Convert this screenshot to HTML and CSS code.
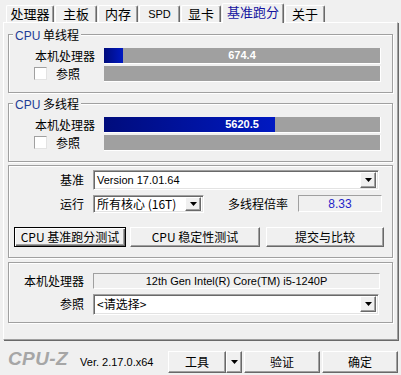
FILE: index.html
```html
<!DOCTYPE html>
<html lang="zh-CN">
<head>
<meta charset="utf-8">
<title>CPU-Z</title>
<link rel="stylesheet" href="styles.css">
</head>
<body>
<div class="window">
  <div class="tabs">
    <div class="tab tw48">处理器</div>
    <div class="tab tw42">主板</div>
    <div class="tab tw40">内存</div>
    <div class="tab tw41 spd">SPD</div>
    <div class="tab tw40">显卡</div>
    <div class="tab active">基准跑分</div>
    <div class="tab tw40">关于</div>
  </div>
  <div class="panel">
    <fieldset class="group">
      <legend><span class="cpu">CPU</span> 单线程</legend>
      <div class="row">
        <span class="label">本机处理器</span>
        <div class="bar"><div class="fill" style="width:7%"></div><span class="value">674.4</span></div>
      </div>
      <div class="row">
        <span class="check"><span class="box"></span>参照</span>
        <div class="bar"></div>
      </div>
    </fieldset>
    <fieldset class="group g2">
      <legend><span class="cpu">CPU</span> 多线程</legend>
      <div class="row">
        <span class="label">本机处理器</span>
        <div class="bar"><div class="fill" style="width:62%"></div><span class="value">5620.5</span></div>
      </div>
      <div class="row">
        <span class="check"><span class="box"></span>参照</span>
        <div class="bar"></div>
      </div>
    </fieldset>
    <div class="frame g3">
      <div class="frow r1">
        <span class="flabel">基准</span>
        <div class="combo edit wide"><span class="ctext latin">Version 17.01.64</span><span class="arrow"><svg width="7" height="4" viewBox="0 0 7 4"><path d="M0 0H7L3.5 4Z" fill="#000"/></svg></span></div>
      </div>
      <div class="frow r2">
        <span class="flabel">运行</span>
        <div class="combo short"><span class="ctext">所有核心 (16T)</span><span class="arrow"><svg width="7" height="4" viewBox="0 0 7 4"><path d="M0 0H7L3.5 4Z" fill="#000"/></svg></span></div>
        <span class="ratio-label">多线程倍率</span>
        <div class="readonly ratio latin">8.33</div>
      </div>
      <div class="frow r3">
        <button class="btn default b1">CPU 基准跑分测试</button>
        <button class="btn b2">CPU 稳定性测试</button>
        <button class="btn b3">提交与比较</button>
      </div>
    </div>
    <div class="frame g4">
      <div class="frow r4">
        <span class="flabel">本机处理器</span>
        <div class="readonly cpuname latin">12th Gen Intel(R) Core(TM) i5-1240P</div>
      </div>
      <div class="frow r5">
        <span class="flabel">参照</span>
        <div class="combo edit wide"><span class="ctext">&lt;请选择&gt;</span><span class="arrow"><svg width="7" height="4" viewBox="0 0 7 4"><path d="M0 0H7L3.5 4Z" fill="#000"/></svg></span></div>
      </div>
    </div>
  </div>
  <div class="footer">
    <span class="logo">CPU-Z</span>
    <span class="ver latin">Ver. 2.17.0.x64</span>
    <div class="fbtns">
      <button class="btn tool">工具</button>
      <button class="btn tool-arrow"><svg width="7" height="4" viewBox="0 0 7 4"><path d="M0 0H7L3.5 4Z" fill="#000"/></svg></button>
      <button class="btn fb">验证</button>
      <button class="btn fb">确定</button>
    </div>
  </div>
</div>
</body>
</html>
```

FILE: styles.css
```css
* { box-sizing: border-box; }
html, body { margin: 0; padding: 0; }
body {
  width: 401px;
  height: 375px;
  overflow: hidden;
  background: #f0f0f0;
  font-family: "Noto Sans CJK SC", sans-serif;
  font-size: 12px;
  line-height: 14px;
  color: #000;
}
.latin { font-family: "Liberation Sans", "Noto Sans CJK SC", sans-serif; font-size: 11px; }

.window { width: 401px; height: 375px; display: flex; flex-direction: column; }

/* tabs */
.tabs { display: flex; align-items: flex-end; gap: 1px; height: 22px; padding-left: 6px; }
.tab {
  height: 17px;
  display: flex; align-items: center; justify-content: center;
  border-top: 1px solid #fff;
  border-left: 1px solid #fff;
  border-right: 1px solid #696969;
  border-radius: 2px 2px 0 0;
  box-shadow: inset -1px 0 0 #a0a0a0;
  color: #000;
  font-size: 13px;
  padding-top: 1px;
  white-space: nowrap;
}
.tab.spd { font-family: "Liberation Sans", sans-serif; font-size: 11px; }
.tw48 { width: 48px; }
.tw42 { width: 42px; }
.tw41 { width: 41px; }
.tw40 { width: 40px; }
.tab.active {
  position: relative; z-index: 1;
  width: 62px; height: 20px;
  margin-bottom: -1px;
  background: #f0f0f0;
  color: #1414a0;
  padding-top: 0;
  padding-bottom: 2px;
}

/* main panel */
.panel {
  height: 322px;
  margin: 0 3px;
  padding: 5px 4px 0 4px;
  border-top: 1px solid #fff;
  border-left: 1px solid #fff;
  border-right: 1px solid #a0a0a0;
  border-bottom: 1px solid #a0a0a0;
  box-shadow: 1px 1px 0 #696969;
}

.group {
  margin: 0;
  padding: 6px 0 10px;
  min-width: 0;
  border: 1px solid #a0a0a0;
  box-shadow: 1px 1px 0 #fff, inset 1px 1px 0 #fff;
}
.group legend {
  margin-left: 4px;
  padding: 0 2px;
  height: 14px;
  line-height: 14px;
  background: #f0f0f0;
}
.cpu { font-family: "Liberation Sans", sans-serif; font-size: 12px; color: #1e3c96; }
.g2 { margin-top: 4px; }

.row {
  display: grid;
  grid-template-columns: 86px 277px;
  column-gap: 9px;
  height: 16px;
  align-items: center;
}
.row + .row { margin-top: 2px; }
.label { text-align: right; white-space: nowrap; }
.check { display: flex; align-items: center; padding-left: 25px; gap: 9px; white-space: nowrap; }
.box {
  width: 13px; height: 13px;
  background: #fff;
  border: 1px solid;
  border-color: #a0a0a0 #e3e3e3 #e3e3e3 #a0a0a0;
}
.bar {
  height: 16px;
  display: grid;
  background: #a0a0a0;
  border-right: 1px solid #fff;
  border-bottom: 1px solid #fff;
}
.fill, .value { grid-area: 1 / 1; }
.fill { height: 15px; background: linear-gradient(to right, #000c7c, #0019c2); }
.value {
  align-self: center; justify-self: center;
  font-family: "Liberation Sans", sans-serif;
  font-size: 11px; font-weight: bold; color: #fff;
  line-height: 13px;
}

/* frames */
.frame {
  border: 1px solid #a0a0a0;
  box-shadow: 1px 1px 0 #fff, inset 1px 1px 0 #fff;
}
.g3 { margin-top: 3px; padding: 4px 0 10px; }
.g4 { margin-top: 4px; padding: 10px 0 7px; }
.frow { display: flex; align-items: center; }
.r1 { height: 20px; }
.r2 { height: 20px; margin-top: 4px; }
.r3 { height: 20px; margin-top: 13px; padding-left: 5px; }
.r4 { height: 16px; }
.r5 { height: 21px; margin-top: 5px; }
.flabel { width: 75px; margin-right: 9px; text-align: right; white-space: nowrap; }

.combo {
  display: flex; align-items: center;
  background: #fff;
  border: 1px solid;
  border-color: #a0a0a0 #fff #fff #a0a0a0;
  box-shadow: inset 1px 1px 0 #696969, inset -1px -1px 0 #e3e3e3;
  padding: 0 2px 0 3px;
}
.combo.wide { width: 286px; height: 20px; }
.r5 .combo.wide { height: 21px; }
.combo.short { width: 111px; height: 18px; }
.ctext { flex: 1; white-space: nowrap; line-height: 14px; }
.arrow {
  width: 16px; height: 16px;
  display: flex; align-items: center; justify-content: center;
  background: #f0f0f0;
  border: 1px solid;
  border-color: #fff #696969 #696969 #fff;
  box-shadow: inset -1px -1px 0 #a0a0a0;
}
.short .arrow { height: 14px; }

.ratio-label { margin-left: 24px; white-space: nowrap; }
.readonly {
  background: #f0f0f0;
  border: 1px solid;
  border-color: #a0a0a0 #fff #fff #a0a0a0;
  display: flex; align-items: center; justify-content: center;
  white-space: nowrap;
}
.ratio { width: 84px; height: 17px; margin-left: 10px; color: #2323c8; font-size: 12px; }
.cpuname { width: 287px; height: 16px; }

.btn {
  margin: 0; padding: 0;
  font: inherit;
  color: #000;
  background: #f0f0f0;
  border: 1px solid;
  border-color: #fff #696969 #696969 #fff;
  box-shadow: inset -1px -1px 0 #a0a0a0;
  display: flex; align-items: center; justify-content: center;
  height: 20px;
  white-space: nowrap;
}
.btn.default {
  border-color: #000;
  box-shadow: inset 1px 1px 0 #fff, inset -1px -1px 0 #696969, inset -2px -2px 0 #a0a0a0;
}
.b1 { width: 112px; }
.b2 { width: 130px; margin-left: 4px; }
.b3 { width: 118px; margin-left: 6px; }

/* footer */
.footer {
  flex: 1;
  display: flex; align-items: center;
  padding: 9px 3px 0 8px;
}
.logo {
  font-family: "Liberation Sans", sans-serif;
  font-size: 19px; font-weight: bold; font-style: italic;
  color: #a6a6a6;
  letter-spacing: 0.4px;
  line-height: 20px;
  margin-bottom: 6px;
}
.ver { margin-left: 12px; }
.fbtns { margin-left: auto; display: flex; align-items: center; }
.fbtns .btn { height: 22px; }
.tool { width: 58px; }
.tool-arrow { width: 16px; }
.fb { width: 76px; margin-left: 2px; }
```
